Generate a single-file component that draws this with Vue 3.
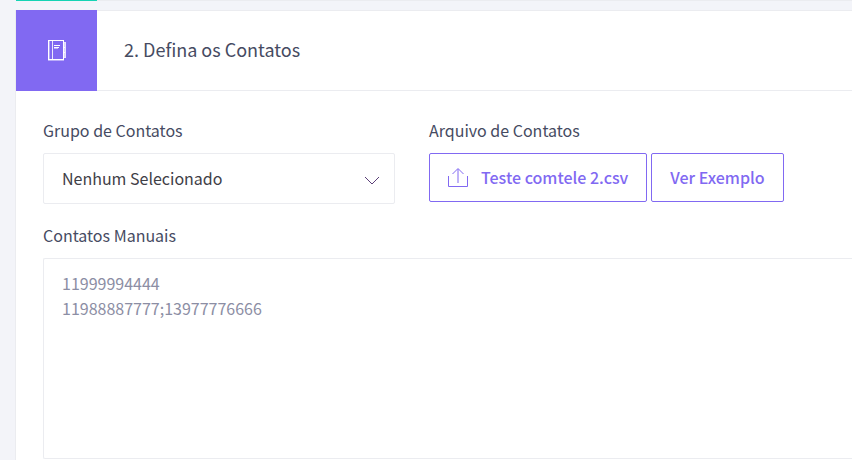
<script setup>
import { ref } from 'vue'

const groups = ['Nenhum Selecionado']
const group = ref(groups[0])
const fileName = ref('Teste comtele 2.csv')
const manual = ref('')
const example = '11999994444\n11988887777;13977776666'
</script>

<template>
  <main class="page">
    <div class="previous"><span class="previous-accent"></span></div>
    <section class="card">
      <header class="card-head">
        <div class="card-icon">
          <svg width="18" height="21" viewBox="0 0 18 21" fill="none" shape-rendering="crispEdges" aria-hidden="true">
            <path d="M0 20.500h16" stroke="#fff" stroke-opacity=".45" />
            <path d="M1.500 1v18" stroke="#fff" stroke-opacity=".4" />
            <path d="M.5 .5h15v19H.5z" stroke="#fff" />
            <path d="M4.500 1v18" stroke="#fff" stroke-opacity=".85" />
            <path d="M6 5.500h6M6 7.500h5" stroke="#fff" />
            <path d="M6 8.500h4" stroke="#fff" stroke-opacity=".5" />
            <path d="M16 3h1v14h-1z" fill="#fff" fill-opacity=".7" />
            <path d="M16 2.500h1.500v15H16M16 7.500h2M16 12.500h2" stroke="#fff" stroke-opacity=".8" />
          </svg>
        </div>
        <h2 class="card-title">2. Defina os Contatos</h2>
      </header>
      <form class="card-body" @submit.prevent>
        <div class="columns">
          <div class="field">
            <label for="group">Grupo de Contatos</label>
            <div class="select-wrap">
              <select id="group" v-model="group" class="control">
                <option v-for="g in groups" :key="g">{{ g }}</option>
              </select>
              <svg class="chevron" width="16" height="8" viewBox="0 0 16 8" fill="none" aria-hidden="true">
                <path d="M1 0l7 7 7-7" stroke="#5b3f78" />
              </svg>
            </div>
          </div>
          <div class="field">
            <label for="upload">Arquivo de Contatos</label>
            <div class="buttons">
              <button id="upload" type="button" class="btn">
                <svg width="21" height="20" viewBox="0 0 21 20" fill="none" stroke="#8169f2" aria-hidden="true">
                  <path d="M.5 8v10.500h19V8" />
                  <path d="M10 15V1M4.500 6L10 .5l5.500 5.500" />
                </svg>
                {{ fileName }}
              </button>
              <button type="button" class="btn">Ver Exemplo</button>
            </div>
          </div>
        </div>
        <div class="field">
          <label for="manual">Contatos Manuais</label>
          <textarea id="manual" v-model="manual" class="control area" :placeholder="example"></textarea>
        </div>
      </form>
    </section>
  </main>
</template>

<style>
body {
  background: #f3f4f9;
}
</style>

<style scoped>
.page {
  min-height: 100vh;
  box-sizing: border-box;
  padding-left: 16px;
  display: flex;
  flex-direction: column;
  gap: 9px;
  overflow: hidden;
  font-family: "Noto Sans CJK SC", "Open Sans", sans-serif;
  font-size: 16px;
  line-height: 25px;
  color: #464b62;
}
.previous {
  border-top: 1px solid #ebecf0;
  display: flex;
}
.previous-accent {
  width: 81px;
  margin-top: -1px;
  border-top: 1px solid #16d3b4;
}
.card {
  flex: 1;
  background: #fff;
  box-shadow: -1px 0 0 #ebecf0;
}
.card-head {
  display: flex;
  align-items: stretch;
  box-shadow: inset 0 1px 0 #ebecf0, inset 0 -1px 0 #ebecf0;
}
.card-icon {
  width: 81px;
  height: 81px;
  display: flex;
  align-items: center;
  justify-content: center;
  background: #8169f2;
}
.card-title {
  margin: 0;
  padding: 0 0 2px 27px;
  align-self: center;
  font-size: 18px;
  font-weight: 400;
}
.card-body {
  padding: 27px 0 1px 27px;
  display: flex;
  flex-direction: column;
  gap: 19px;
}
.columns {
  display: grid;
  grid-template-columns: minmax(200px, 352px) 1fr;
  gap: 34px;
}
.field {
  display: flex;
  flex-direction: column;
  gap: 10px;
}
.select-wrap {
  display: grid;
  align-items: center;
}
.select-wrap > * {
  grid-area: 1 / 1;
}
.chevron {
  justify-self: end;
  margin: 4px 15px 0 0;
  pointer-events: none;
}
.control {
  box-sizing: border-box;
  width: 100%;
  margin: 0;
  padding: 12px 18px;
  border: 1px solid #ebecf0;
  border-radius: 2px;
  background: #fff;
  color: #3f4047;
  font: inherit;
  appearance: none;
  outline: none;
}
select.control {
  height: 51px;
}
.area {
  display: block;
  height: 201px;
  border-right: 0;
  border-radius: 2px 0 0 2px;
  resize: none;
}
.area::placeholder {
  color: #8c8ea4;
  opacity: 1;
}
.buttons {
  display: flex;
  gap: 4px;
}
.btn {
  height: 49px;
  padding: 0 18px;
  display: flex;
  align-items: center;
  gap: 12px;
  border: 1px solid #8169f2;
  border-radius: 2px;
  background: #fff;
  color: #8169f2;
  font: inherit;
  font-weight: 500;
  white-space: nowrap;
}
</style>
